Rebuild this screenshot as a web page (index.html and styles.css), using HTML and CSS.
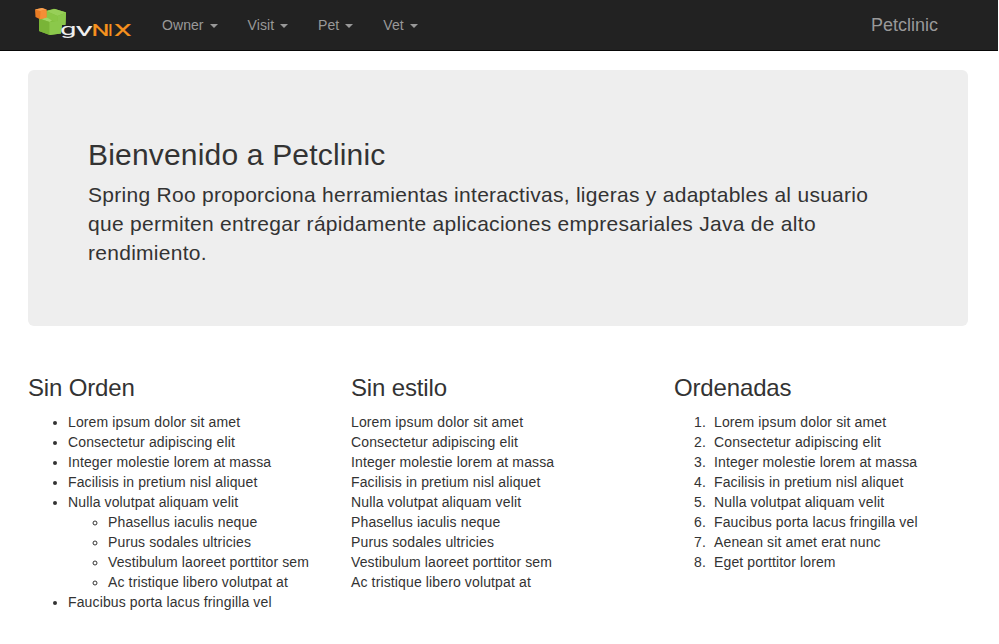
FILE: index.html
```html
<!DOCTYPE html>
<html lang="es">
<head>
<meta charset="utf-8">
<title>Petclinic</title>
<link rel="stylesheet" href="styles.css">
</head>
<body>
<nav class="navbar">
  <a class="logo">
    <svg width="98" height="34" viewBox="0 0 98 34">
      <path d="M5 11.500l7-2.300V4l8-2.300 12 3.500-.5 12.300L28 18l-1 8.500-11 1.500-11-4z" fill="#80bd3d"/>
      <path d="M12 4l9-2 11 3.500-8.500 3.500z" fill="#97cf58"/>
      <path d="M12 4l11.500 5v6L18 13.500l-6-2z" fill="#89c646"/>
      <path d="M5 11.500l7-1.500 6 3.500-2.500 1.500z" fill="#a0d665"/>
      <path d="M5 11.500L15.500 15v13L5 24z" fill="#79b437"/>
      <path d="M15.500 15l8-1V9L32 5.500l-.5 12.500H28l-1 8.500L15.500 28z" fill="#8bc84b"/>
      <path d="M1 2.500L8 1l4.500 1.500v8L6 12.200 1.500 10z" fill="#e87c24"/>
      <path d="M1 2.500L8 1l4.500 1.500-6 1.500z" fill="#f7a052"/>
      <path d="M6.500 4l6-1.500v8L6 12.200z" fill="#f58e36"/>
      <g class="wordmark">
        <text class="light" x="26" y="28" font-size="17" textLength="16.500" lengthAdjust="spacingAndGlyphs">g</text>
        <text class="light" x="41.500" y="29" font-size="19" textLength="17.500" lengthAdjust="spacingAndGlyphs">v</text>
        <text class="orange" x="57.500" y="29" font-size="17" textLength="18" lengthAdjust="spacingAndGlyphs">N</text>
        <text class="orange" x="74" y="29" font-size="17">I</text>
        <text class="orange" x="80" y="29" font-size="17" textLength="17.500" lengthAdjust="spacingAndGlyphs">X</text>
      </g>
    </svg>
  </a>
  <ul class="menu">
    <li>Owner <b class="caret"></b></li>
    <li>Visit <b class="caret"></b></li>
    <li>Pet <b class="caret"></b></li>
    <li>Vet <b class="caret"></b></li>
  </ul>
  <span class="brand">Petclinic</span>
</nav>
<main>
  <section class="jumbotron">
    <h2>Bienvenido a Petclinic</h2>
    <p>Spring Roo proporciona herramientas interactivas, ligeras y adaptables al usuario que permiten entregar rápidamente aplicaciones empresariales Java de alto rendimiento.</p>
  </section>
  <div class="columns">
    <section>
      <h3>Sin Orden</h3>
      <ul>
        <li>Lorem ipsum dolor sit amet</li>
        <li>Consectetur adipiscing elit</li>
        <li>Integer molestie lorem at massa</li>
        <li>Facilisis in pretium nisl aliquet</li>
        <li>Nulla volutpat aliquam velit
          <ul>
            <li>Phasellus iaculis neque</li>
            <li>Purus sodales ultricies</li>
            <li>Vestibulum laoreet porttitor sem</li>
            <li>Ac tristique libero volutpat at</li>
          </ul>
        </li>
        <li>Faucibus porta lacus fringilla vel</li>
      </ul>
    </section>
    <section>
      <h3>Sin estilo</h3>
      <ul class="plain">
        <li>Lorem ipsum dolor sit amet</li>
        <li>Consectetur adipiscing elit</li>
        <li>Integer molestie lorem at massa</li>
        <li>Facilisis in pretium nisl aliquet</li>
        <li>Nulla volutpat aliquam velit</li>
        <li>Phasellus iaculis neque</li>
        <li>Purus sodales ultricies</li>
        <li>Vestibulum laoreet porttitor sem</li>
        <li>Ac tristique libero volutpat at</li>
      </ul>
    </section>
    <section>
      <h3>Ordenadas</h3>
      <ol>
        <li>Lorem ipsum dolor sit amet</li>
        <li>Consectetur adipiscing elit</li>
        <li>Integer molestie lorem at massa</li>
        <li>Facilisis in pretium nisl aliquet</li>
        <li>Nulla volutpat aliquam velit</li>
        <li>Faucibus porta lacus fringilla vel</li>
        <li>Aenean sit amet erat nunc</li>
        <li>Eget porttitor lorem</li>
      </ol>
    </section>
  </div>
</main>
</body>
</html>
```
FILE: styles.css
```css
* { box-sizing: border-box; }
body {
  margin: 0;
  font: 14px/20px "Liberation Sans", Arial, sans-serif;
  color: #333;
  background: #fff;
}
.navbar {
  display: flex;
  width: 998px;
  height: 51px;
  padding: 0 60px 0 34px;
  background: #222;
  border-bottom: 1px solid #080808;
  color: #999;
}
.logo { width: 98px; padding-top: 7px; }
.logo svg { display: block; }
.wordmark { font-family: Roboto, sans-serif; }
.light { fill: #eee; }
.orange { fill: #f6921e; stroke: #f6921e; stroke-width: 0.2px; }
.menu { display: flex; margin: 0 auto 0 15px; padding: 0; list-style: none; }
.menu li { padding: 15px; letter-spacing: 0.07px; }
.caret {
  display: inline-block;
  margin-left: 2px;
  vertical-align: middle;
  border: 4px solid transparent;
  border-top-color: #999;
  border-bottom: 0;
}
.brand { padding: 15px 0; font-size: 18px; }
main { width: 940px; margin: 19px 0 0 28px; }
.jumbotron {
  height: 256px;
  padding: 68px 60px 0;
  border-radius: 6px;
  background: #eee;
}
h2, h3 { margin: 0; font-weight: 400; line-height: 1.1; }
h2 { font-size: 30px; letter-spacing: 0.18px; }
.jumbotron p {
  margin: 9px 0 0;
  font-size: 21px;
  line-height: 29px;
  letter-spacing: 0.28px;
}
.columns {
  display: grid;
  grid-template-columns: repeat(3, 293px);
  column-gap: 30px;
  margin-top: 49px;
}
h3 { font-size: 24px; margin-bottom: 11px; letter-spacing: -0.15px; }
ul, ol { margin: 0; padding-left: 40px; }
.columns li { letter-spacing: 0.13px; }
.plain { padding: 0; list-style: none; }
ol { counter-reset: item; list-style: none; }
ol li { display: flex; counter-increment: item; }
ol li::before {
  content: counter(item) ".";
  flex: none;
  width: 20px;
  margin-left: -20px;
}
```
